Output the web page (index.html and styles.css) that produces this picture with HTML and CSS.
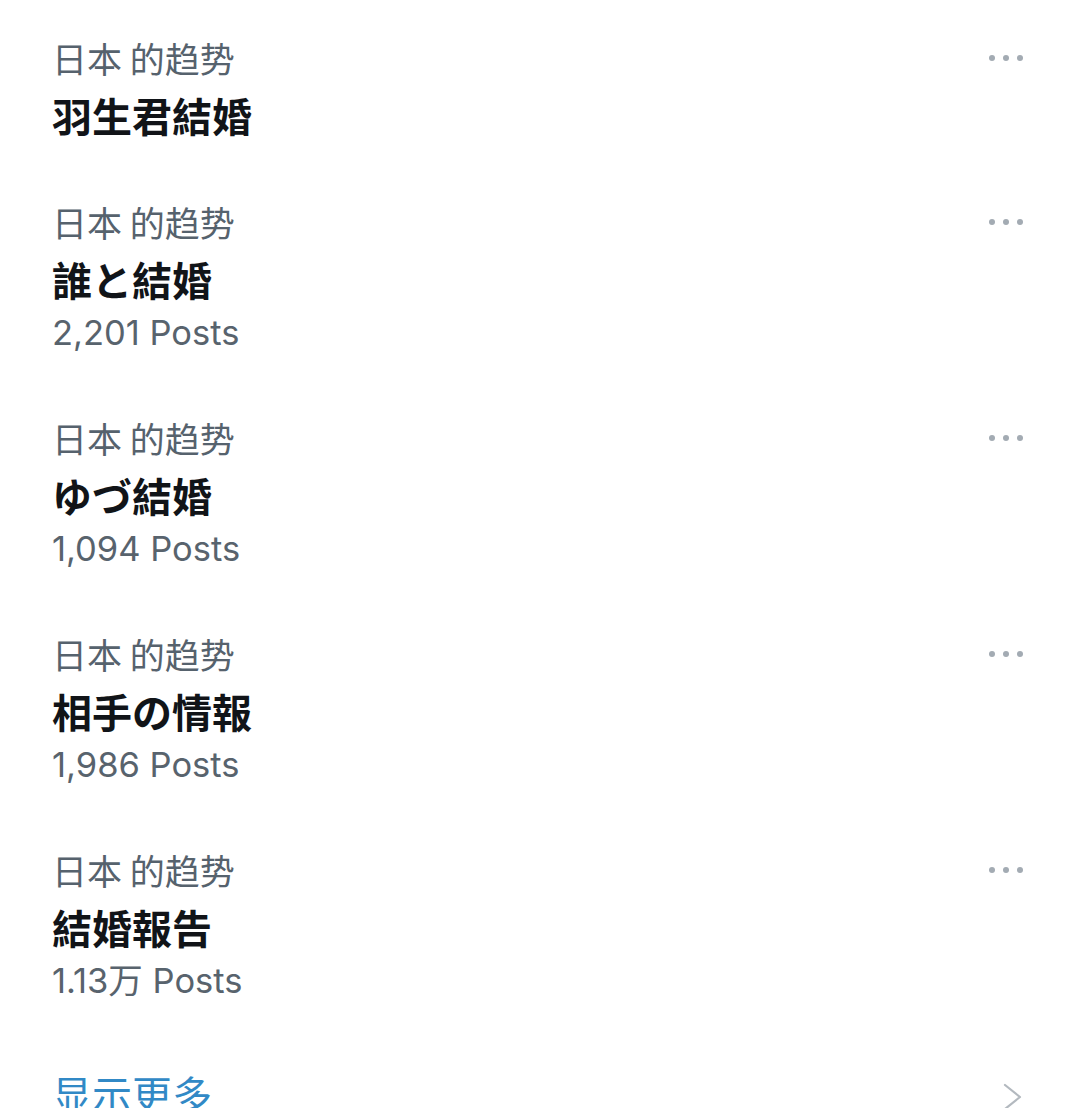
FILE: index.html
```html
<!DOCTYPE html>
<html lang="zh">
<head>
<meta charset="utf-8">
<title>Trends</title>
<link rel="stylesheet" href="styles.css">
</head>
<body>
<main class="trends">
  <div class="trend">
    <div class="trend-body">
      <div class="meta">日本 的趋势</div>
      <div class="title">羽生君結婚</div>
    </div>
    <div class="more"><svg width="34" height="6" viewBox="0 0 34 6"><circle cx="3" cy="3" r="3"/><circle cx="17" cy="3" r="3"/><circle cx="31" cy="3" r="3"/></svg></div>
  </div>
  <div class="trend">
    <div class="trend-body">
      <div class="meta">日本 的趋势</div>
      <div class="title">誰と結婚</div>
      <div class="count">2,201 Posts</div>
    </div>
    <div class="more"><svg width="34" height="6" viewBox="0 0 34 6"><circle cx="3" cy="3" r="3"/><circle cx="17" cy="3" r="3"/><circle cx="31" cy="3" r="3"/></svg></div>
  </div>
  <div class="trend">
    <div class="trend-body">
      <div class="meta">日本 的趋势</div>
      <div class="title">ゆづ結婚</div>
      <div class="count">1,094 Posts</div>
    </div>
    <div class="more"><svg width="34" height="6" viewBox="0 0 34 6"><circle cx="3" cy="3" r="3"/><circle cx="17" cy="3" r="3"/><circle cx="31" cy="3" r="3"/></svg></div>
  </div>
  <div class="trend">
    <div class="trend-body">
      <div class="meta">日本 的趋势</div>
      <div class="title">相手の情報</div>
      <div class="count">1,986 Posts</div>
    </div>
    <div class="more"><svg width="34" height="6" viewBox="0 0 34 6"><circle cx="3" cy="3" r="3"/><circle cx="17" cy="3" r="3"/><circle cx="31" cy="3" r="3"/></svg></div>
  </div>
  <div class="trend">
    <div class="trend-body">
      <div class="meta">日本 的趋势</div>
      <div class="title">結婚報告</div>
      <div class="count">1.13万 Posts</div>
    </div>
    <div class="more"><svg width="34" height="6" viewBox="0 0 34 6"><circle cx="3" cy="3" r="3"/><circle cx="17" cy="3" r="3"/><circle cx="31" cy="3" r="3"/></svg></div>
  </div>
  <div class="show-more">
    <span class="show-more-text">显示更多</span>
    <svg class="chevron" width="20" height="28" viewBox="0 0 20 28"><polyline points="2,2 17,14 2,26"/></svg>
  </div>
</main>
</body>
</html>
```
FILE: styles.css
```css
html, body {
  margin: 0;
  padding: 0;
  background: #ffffff;
}
body {
  height: 1108px;
  overflow: hidden;
  font-family: "Noto Sans CJK SC", "Noto Sans CJK JP", sans-serif;
}
.trends {
  padding: 7px 57px 0 52px;
}
.trend {
  display: flex;
  justify-content: space-between;
  align-items: flex-start;
  padding: 25px 0;
}
.trend-body {
  display: flex;
  flex-direction: column;
}
.meta {
  font-size: 35px;
  line-height: 52px;
  color: #56626d;
}
.title {
  font-family: "Noto Sans CJK JP", "Noto Sans CJK SC", sans-serif;
  font-size: 40px;
  font-weight: 700;
  line-height: 62px;
  color: #111418;
}
.count {
  font-family: "Inter", "Noto Sans CJK SC", sans-serif;
  font-size: 34.5px;
  line-height: 46px;
  padding-bottom: 6px;
  color: #58636d;
}
.more {
  height: 52px;
  display: flex;
  align-items: center;
}
.more svg {
  fill: #a3abb3;
  display: block;
}
.show-more {
  display: flex;
  justify-content: space-between;
  align-items: center;
  padding-top: 32px;
}
.show-more-text {
  font-size: 40px;
  line-height: 52px;
  color: #3189c6;
}
.chevron {
  display: block;
  margin-top: 8px;
}
.chevron polyline {
  fill: none;
  stroke: #b3b9bf;
  stroke-width: 2.2;
  stroke-linecap: round;
  stroke-linejoin: round;
}
```
